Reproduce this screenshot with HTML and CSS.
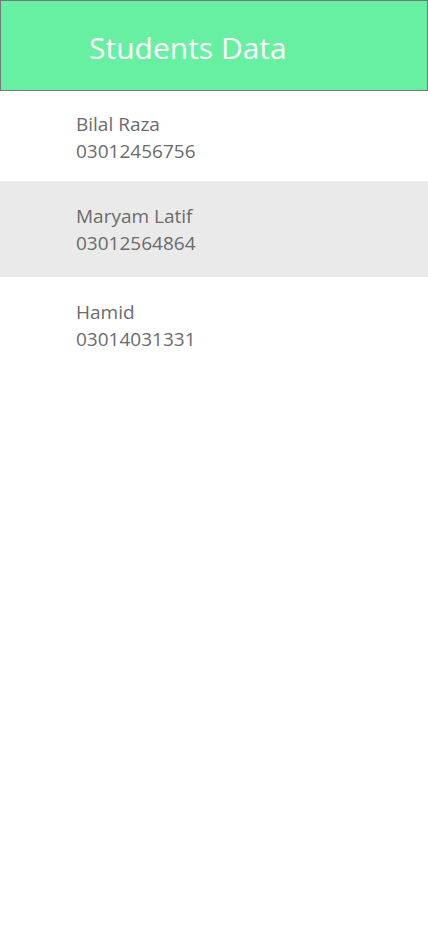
FILE: index.html
```html
<!DOCTYPE html>
<html>
<head>
<meta charset="utf-8">
<link rel="stylesheet" href="styles.css">
</head>
<body>
<header class="top-bar">
  <h1 class="title">Students Data</h1>
</header>
<ul class="list">
  <li class="row row-first">
    <span class="name">Bilal Raza</span>
    <span class="phone">03012456756</span>
  </li>
  <li class="row row-alt">
    <span class="name">Maryam Latif</span>
    <span class="phone">03012564864</span>
  </li>
  <li class="row">
    <span class="name">Hamid</span>
    <span class="phone">03014031331</span>
  </li>
</ul>
</body>
</html>
```

FILE: styles.css
```css
html, body {
  margin: 0;
  padding: 0;
  background: #ffffff;
  font-family: "Open Sans", "Noto Sans", sans-serif;
}

.top-bar {
  box-sizing: border-box;
  height: 91px;
  background: #68f0a2;
  border: 1px solid #777777;
  display: flex;
  align-items: center;
  padding-left: 88px;
  padding-top: 3px;
}

.title {
  margin: 0;
  font-weight: 400;
  font-size: 30px;
  color: #ffffff;
}

.list {
  list-style: none;
  margin: 0;
  padding: 0;
}

.row {
  box-sizing: border-box;
  height: 96px;
  display: flex;
  flex-direction: column;
  justify-content: center;
  padding-left: 76px;
  padding-top: 2px;
  color: #6b6b6b;
  font-size: 19px;
  line-height: 27px;
}

.row-first {
  height: 90px;
  padding-top: 4px;
}

.row-alt {
  background: #eaeaea;
}
```
